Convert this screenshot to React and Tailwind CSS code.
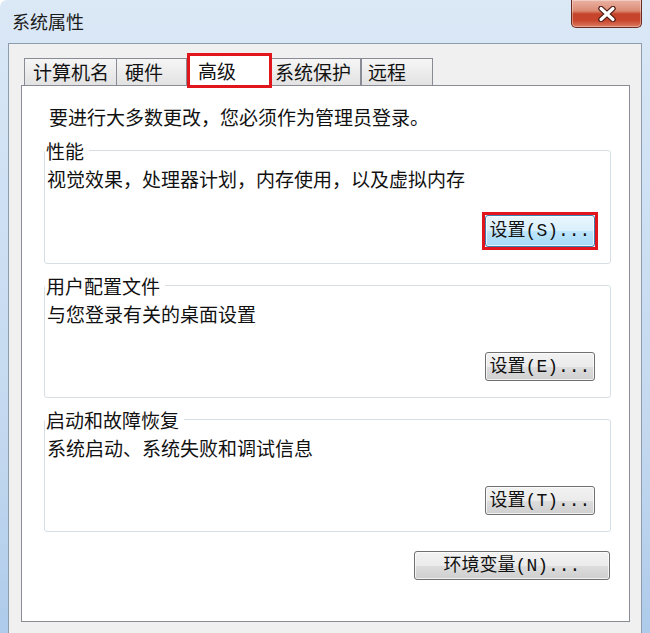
import React from "react";

const cjk = "font-['Noto_Sans_CJK_SC','Liberation_Sans',sans-serif]";
const btnFont = "font-['Liberation_Mono','Noto_Sans_CJK_SC',monospace]";

function CloseButton() {
  return (
    <div className="mr-[8px] flex h-[28px] w-[71px] items-center justify-center rounded-b-[5px] border border-t-0 border-[#6b2b20] bg-[linear-gradient(to_bottom,#eab3a4_0%,#dc8b74_40%,#c4432a_52%,#c8452c_75%,#dc7a5f_100%)] shadow-[inset_0_0_0_1px_rgba(255,255,255,0.35)]">
      <svg width="20" height="16" viewBox="0 0 20 16">
        <path d="M4 2.5 L16 13.5 M16 2.5 L4 13.5" stroke="#4a1a12" strokeWidth="5.5" strokeLinecap="round" />
        <path d="M4 2.5 L16 13.5 M16 2.5 L4 13.5" stroke="#ffffff" strokeWidth="3.2" strokeLinecap="round" />
      </svg>
    </div>
  );
}

function Button({ children, className = "", focused = false }) {
  const base = focused
    ? "border-[#3c7fb1] bg-[linear-gradient(to_bottom,#eaf6fd_0%,#d9f0fc_50%,#bee6fd_51%,#a7d9f5_100%)]"
    : "border-[#707070] bg-[linear-gradient(to_bottom,#f2f2f2_0%,#ebebeb_50%,#dddddd_51%,#cfcfcf_100%)]";
  return (
    <div
      className={`flex items-center justify-center rounded-[3px] border shadow-[inset_0_0_0_1px_rgba(255,255,255,0.7)] text-[18px] leading-[20px] text-[#111] ${btnFont} ${base} ${className}`}
    >
      {children}
    </div>
  );
}

function Group({ title, desc, button }) {
  return (
    <fieldset className="rounded-[3px] border border-[#d5dfe5] pb-[16px]">
      <legend className="pl-[1px] pr-[5px] text-[19px] leading-[23px] text-[#111]">{title}</legend>
      <div className="mt-[5px] pl-[2px] text-[19px] leading-[23px] text-[#111]">{desc}</div>
      <div className="mt-[27px] flex justify-end pr-[15px]">{button}</div>
    </fieldset>
  );
}

export default function App() {
  return (
    <div className={`h-[633px] w-[650px] overflow-hidden bg-white ${cjk}`}>
      <div className="flex h-full w-full flex-col rounded-tl-[7px] bg-[linear-gradient(to_bottom,#dbe8f6_0%,#cfe1f4_30%,#c3d8ef_70%,#aecbeb_100%)]">
        {/* Title bar */}
        <div className="flex h-[43px] items-start justify-between">
          <div className="pl-[12px] pt-[9px] text-[18px] leading-[24px] text-[#1b1b1b]">系统属性</div>
          <CloseButton />
        </div>

        {/* Dialog body */}
        <div className="mx-[8px] flex flex-1 flex-col border border-b-0 border-[#8d9cae] bg-[#f0f0f0] pl-[12px] pr-[11px] pt-[9px]">
          {/* Tabs */}
          <div className="flex h-[32px] items-end pl-[3px] text-[19px] text-[#111]">
            <div className="h-[27px] w-[93px] border border-b-0 border-[#898c95] bg-[linear-gradient(to_bottom,#f6f6f6,#e2e2e2)] pl-[8px] leading-[26px]">计算机名</div>
            <div className="-ml-px h-[27px] w-[71px] border border-b-0 border-[#898c95] bg-[linear-gradient(to_bottom,#f6f6f6,#e2e2e2)] pl-[8px] leading-[26px]">硬件</div>
            <div className="relative z-10 -mb-[3px] h-[35px] w-[85px] border-[3px] border-[#e0161c] bg-white pl-[8px] leading-[29px]">高级</div>
            <div className="h-[27px] w-[89px] border border-b-0 border-l-0 border-[#898c95] bg-[linear-gradient(to_bottom,#f6f6f6,#e2e2e2)] pl-[3px] leading-[26px]">系统保护</div>
            <div className="h-[27px] w-[72px] border border-b-0 border-[#898c95] bg-[linear-gradient(to_bottom,#f6f6f6,#e2e2e2)] pl-[6px] leading-[26px]">远程</div>
          </div>

          {/* Panel */}
          <div className="flex h-[537px] flex-col border border-[#898c95] bg-white pl-[22px] pr-[18px] pt-[19px]">
            <div className="ml-[5px] text-[19px] leading-[24px] text-[#111]">要进行大多数更改，您必须作为管理员登录。</div>

            <div className="mt-[10px]">
              <Group
                title="性能"
                desc="视觉效果，处理器计划，内存使用，以及虚拟内存"
                button={
                  <div className="-m-[3px] -mt-[5px] border-[3px] border-[#e0161c]">
                    <Button focused className="h-[32px] w-[110px]">
                      设置(S)...
                    </Button>
                  </div>
                }
              />
            </div>

            <div className="mt-[10px]">
              <Group
                title="用户配置文件"
                desc="与您登录有关的桌面设置"
                button={<Button className="h-[29px] w-[110px]">设置(E)...</Button>}
              />
            </div>

            <div className="mt-[10px]">
              <Group
                title="启动和故障恢复"
                desc="系统启动、系统失败和调试信息"
                button={<Button className="h-[29px] w-[110px]">设置(T)...</Button>}
              />
            </div>

            <div className="mt-[19px] flex justify-end pr-[1px]">
              <Button className="h-[29px] w-[196px]">环境变量(N)...</Button>
            </div>
          </div>
        </div>
      </div>
    </div>
  );
}
